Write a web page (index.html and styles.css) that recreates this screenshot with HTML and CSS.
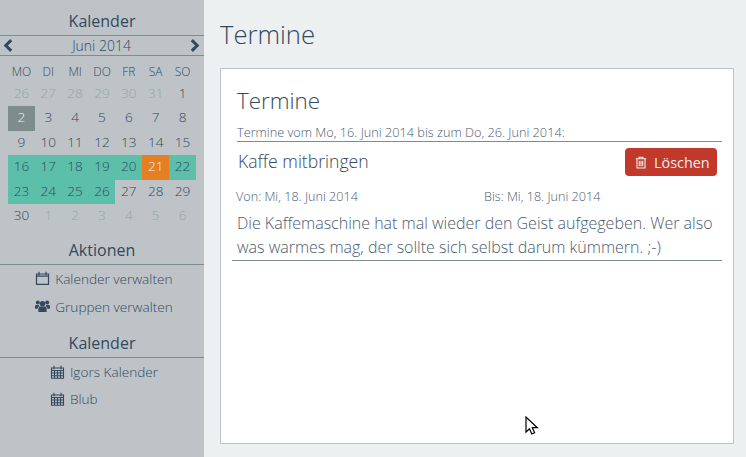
FILE: index.html
```html
<!DOCTYPE html>
<html lang="de">
<head>
  <meta charset="UTF-8">
  <title>Termine</title>
  <link rel="stylesheet" href="styles.css">
</head>
<body>
  <svg width="0" height="0" class="defs">
    <symbol id="i-cal" viewBox="0 0 14 14"><path d="M1 3h12v10.300H1zM3.500 .8v3.500M10.500 .8v3.500M1 5.200h12" fill="none" stroke="currentColor" stroke-width="1.200"/></symbol>
    <symbol id="i-grid" viewBox="0 0 14 14"><path d="M1 3h12v10.300H1zM3.500 .8v3.500M10.500 .8v3.500M1 5.500h12M1 8h12M1 10.700h12M4 5.500v7.800M7 5.500v7.800M10 5.500v7.800" fill="none" stroke="currentColor" stroke-width="1.100"/></symbol>
    <symbol id="i-users" viewBox="0 0 16 14"><circle cx="8" cy="4.500" r="2.900"/><circle cx="3" cy="3.200" r="2.100"/><circle cx="13" cy="3.200" r="2.100"/><path d="M3.600 13.500V9.500Q3.600 7.600 6 7.600h4q2.400 0 2.400 1.900v4zM0 9.800V7.200q0-1.400 1.600-1.400h2.200q.5 1 1.200 1.500-2.300.5-2.300 2.500zM16 9.800V7.200q0-1.400-1.600-1.400h-2.200q-.5 1-1.200 1.500 2.300.5 2.300 2.500z"/></symbol>
  </svg>

  <aside class="sidebar">
    <h3 class="side-title first">Kalender</h3>
    <div class="month-nav">
      <svg class="chev" viewBox="0 0 10 12"><path d="M7.500 1 2.500 6l5 5" fill="none" stroke="currentColor" stroke-width="2.800"/></svg>
      <span>Juni 2014</span>
      <svg class="chev" viewBox="0 0 10 12"><path d="M2.500 1l5 5-5 5" fill="none" stroke="currentColor" stroke-width="2.800"/></svg>
    </div>
    <div class="cal">
      <div class="dow">MO</div><div class="dow">DI</div><div class="dow">MI</div><div class="dow">DO</div><div class="dow">FR</div><div class="dow">SA</div><div class="dow">SO</div>
      <div class="off">26</div><div class="off">27</div><div class="off">28</div><div class="off">29</div><div class="off">30</div><div class="off">31</div><div>1</div>
      <div class="today">2</div><div>3</div><div>4</div><div>5</div><div>6</div><div>7</div><div>8</div>
      <div>9</div><div>10</div><div>11</div><div>12</div><div>13</div><div>14</div><div>15</div>
      <div class="sel">16</div><div class="sel">17</div><div class="sel">18</div><div class="sel">19</div><div class="sel">20</div><div class="now">21</div><div class="sel">22</div>
      <div class="sel">23</div><div class="sel">24</div><div class="sel">25</div><div class="sel">26</div><div>27</div><div>28</div><div>29</div>
      <div>30</div><div class="off">1</div><div class="off">2</div><div class="off">3</div><div class="off">4</div><div class="off">5</div><div class="off">6</div>
    </div>

    <h3 class="side-title actions">Aktionen</h3>
    <ul class="side-list">
      <li><svg class="ico"><use href="#i-cal"/></svg>Kalender verwalten</li>
      <li><svg class="ico"><use href="#i-users"/></svg>Gruppen verwalten</li>
    </ul>
    <h3 class="side-title">Kalender</h3>
    <ul class="side-list cals">
      <li><svg class="ico"><use href="#i-grid"/></svg>Igors Kalender</li>
      <li><svg class="ico"><use href="#i-grid"/></svg>Blub</li>
    </ul>
  </aside>

  <main class="content">
    <h1 class="page-title">Termine</h1>
    <section class="card">
      <h2 class="card-title">Termine</h2>
      <p class="range">Termine vom Mo, 16. Juni 2014 bis zum Do, 26. Juni 2014:</p>
      <div class="event-head">
        <h4 class="event-title">Kaffe mitbringen</h4>
        <button class="btn-del">
          <svg class="trash" viewBox="0 0 12 13"><path d="M4 2.500V1.200h4v1.300M.8 2.800h10.400M2 2.800V12h8V2.800M4.300 4.800v5.400M6 4.800v5.400M7.700 4.800v5.400" fill="none" stroke="currentColor" stroke-width="1.100"/></svg>
          Löschen
        </button>
      </div>
      <div class="dates">
        <span>Von: Mi, 18. Juni 2014</span>
        <span>Bis: Mi, 18. Juni 2014</span>
      </div>
      <p class="desc">Die Kaffemaschine hat mal wieder den Geist aufgegeben. Wer also was warmes mag, der sollte sich selbst darum kümmern. ;-)</p>
    </section>
  </main>

  <svg class="cursor" width="14" height="20" viewBox="0 0 14 20"><path d="M1 1v15l3.500-3.300 2.300 5.300 2.800-1.200-2.300-5.100h5z" fill="#fff" stroke="#000" stroke-width="1.200"/></svg>
</body>
</html>
```

FILE: styles.css
```css
html, body {
  height: 100%;
}
body {
  margin: 0;
  height: 457px;
  overflow: hidden;
  display: flex;
  font-family: 'Open Sans', sans-serif;
  font-weight: 300;
  background: #ecf0f1;
  color: #34495e;
}
.defs {
  position: absolute;
}
.sidebar {
  width: 204px;
  flex: none;
  background: #bdc3c7;
}
.side-title {
  margin: 0;
  height: 27px;
  font-size: 16px;
  line-height: 26px;
  font-weight: 400;
  text-align: center;
  border-bottom: 1px solid #7f8c8d;
}
.side-title.first {
  margin-top: 8px;
}
.side-title.actions {
  margin-top: 9px;
}
.month-nav {
  height: 19px;
  padding: 0 4px 0 3px;
  display: flex;
  align-items: center;
  justify-content: space-between;
  font-size: 14px;
  border-bottom: 1px solid #7f8c8d;
}
.chev {
  width: 11px;
  height: 13px;
}
.cal {
  width: 188px;
  margin: 6px 0 0 8px;
  display: grid;
  grid-template-columns: repeat(7, 1fr);
  grid-template-rows: 20px repeat(6, 24.400px);
  font-size: 13.600px;
  line-height: 22px;
  text-align: center;
}
.cal .dow {
  font-size: 12px;
  line-height: 19px;
}
.cal .off {
  color: #95a5a6;
}
.cal .today {
  background: #7f8c8d;
  color: #ecf0f1;
}
.cal .sel {
  background: #5bbfaa;
}
.cal .now {
  background: #e67e22;
  color: #ecf0f1;
}
.side-list {
  list-style: none;
  width: fit-content;
  margin: 0 auto 9px;
  padding: 0 0 0 4px;
  font-size: 13.600px;
}
.side-list li {
  height: 28px;
  padding-bottom: 2px;
  box-sizing: border-box;
  display: flex;
  align-items: center;
}
.side-list.cals li {
  height: 27px;
  padding-bottom: 0;
}
.ico {
  width: 15px;
  height: 14px;
  margin-right: 5px;
  fill: currentColor;
}
.content {
  flex: 1;
  padding: 16px 12px 13px 16px;
  display: flex;
  flex-direction: column;
}
.page-title {
  margin: 0 0 14px;
  font-size: 25.600px;
  line-height: 38px;
  font-weight: 300;
}
.card {
  flex: 1;
  background: #fff;
  border: 1px solid #bdc3c7;
  padding: 17px 11px 0;
}
.card-title {
  margin: 0 0 0 5px;
  font-size: 22.400px;
  line-height: 30px;
  font-weight: 300;
}
.range {
  margin: 8px 0 0 5px;
  padding-bottom: 1px;
  font-size: 12.720px;
  line-height: 16px;
  color: #4a5c6e;
  border-bottom: 1px solid #7f8c8d;
}
.event-head {
  margin: 6px 5px 0 6px;
  display: flex;
  justify-content: space-between;
  align-items: center;
}
.event-title {
  margin: 0;
  padding-bottom: 2px;
  font-size: 17.600px;
  line-height: 26px;
  font-weight: 300;
}
.btn-del {
  width: 92px;
  height: 28px;
  padding: 0 0 0 10px;
  border: none;
  border-radius: 4px;
  background: #c0392b;
  color: #ecf0f1;
  font-family: inherit;
  font-size: 14.400px;
  display: flex;
  align-items: center;
  gap: 7px;
}
.trash {
  width: 12px;
  height: 13px;
}
.dates {
  margin: 12px 0 0 4px;
  display: grid;
  grid-template-columns: 248px 1fr;
  font-size: 12.640px;
  line-height: 16px;
  color: #4a5c6e;
}
.desc {
  margin: 7px 0 0;
  padding: 0 0 1px 5px;
  font-size: 16px;
  line-height: 24px;
  color: #4a5c6e;
  border-bottom: 1px solid #7f8c8d;
}
.cursor {
  position: absolute;
  left: 525px;
  top: 416px;
}
```
